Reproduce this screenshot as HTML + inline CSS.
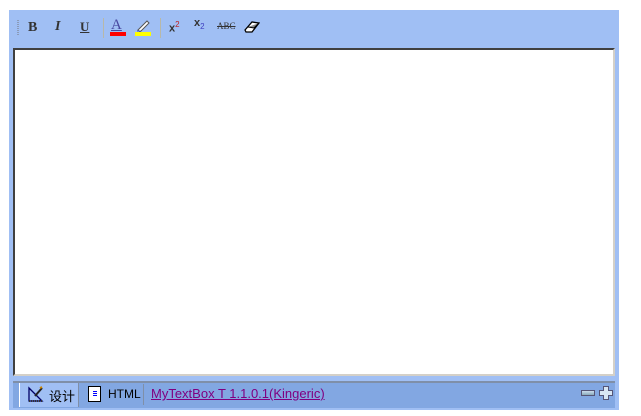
<!DOCTYPE html>
<html><head><meta charset="utf-8"><style>
body{margin:0;background:#fff;width:641px;height:416px;position:relative;overflow:hidden;font-family:"Liberation Sans","Noto Sans CJK SC",sans-serif}
.outer{position:absolute;left:9px;top:10px;width:610px;height:400px;background:#a0bff4}
.ed{position:absolute;left:13px;top:48px;width:598px;height:324px;background:#fff;border-top:2px solid #404040;border-left:2px solid #404040;border-right:2px solid #d4d0c8;border-bottom:2px solid #d4d0c8}
.bar{position:absolute;left:13px;top:381px;width:602px;height:25px;background:#82a7e2;border-top:2px solid #7f8fa8}
.t{position:absolute;font-size:13px;color:#333;font-weight:bold}
.sep{position:absolute;top:18px;width:1px;height:20px;background:#b8b8a8}
</style></head><body>
<div class="outer"></div>
<div style="position:absolute;left:17px;top:20px;width:2px;height:15px;background:repeating-linear-gradient(#8a9ab8 0 1px,transparent 1px 2px)"></div>
<div class="t" style="left:28px;top:20px;font-family:'Liberation Serif';font-size:14px">B</div>
<div class="t" style="left:55px;top:19px;font-family:'Liberation Serif';font-style:italic;font-size:14px">I</div>
<div class="t" style="left:80px;top:19px;font-family:'Liberation Serif';text-decoration:underline;font-size:13px">U</div>
<div class="sep" style="left:103px"></div>
<div class="t" style="left:111px;top:17px;font-family:'Liberation Serif';color:#4848a0;font-weight:normal;font-size:15px;text-decoration:underline">A</div>
<div style="position:absolute;left:110px;top:32px;width:16px;height:4px;background:#f00"></div>
<svg style="position:absolute;left:135px;top:18px" width="16" height="14"><path d="M3 12 L12 3 L14 5 L5 14Z" fill="#fff" stroke="#555"/><path d="M2 13h4" stroke="#4060c0"/></svg>
<div style="position:absolute;left:135px;top:32px;width:16px;height:4px;background:#ff0"></div>
<div class="sep" style="left:160px"></div>
<div class="t" style="left:169px;top:20px;font-size:11px">x<sup style="color:#c02020;font-size:8px;font-weight:normal">2</sup></div>
<div class="t" style="left:194px;top:17px;font-size:11px">x<sub style="color:#4040c0;font-size:8px;font-weight:normal">2</sub></div>
<div class="t" style="left:217px;top:21px;font-size:9px;font-family:'Liberation Serif';font-weight:normal;text-decoration:line-through">ABC</div>
<svg style="position:absolute;left:244px;top:20px" width="16" height="14"><path d="M1 10 L8 2 L15 3 L8 12 L2 12Z" fill="#fff" stroke="#000" stroke-width="1.3"/><path d="M4 7 L10 8 L15 3" fill="#888" stroke="#000"/></svg>
<div class="ed"></div>
<div class="bar"></div>
<div style="position:absolute;left:19px;top:383px;width:58px;height:24px;background:#a0bff4;border-left:1px solid #fff;border-right:1px solid #7f8fa8"></div>
<svg style="position:absolute;left:28px;top:386px" width="16" height="16"><path d="M1 15 L1 2 L14 15Z" fill="none" stroke="#006" stroke-width="1.3"/><path d="M1 15h14" stroke="#333" stroke-width="2" stroke-dasharray="1 1"/><path d="M7 10 L14 2" stroke="#222" stroke-width="2"/><path d="M12 2l2-1" stroke="#c80" stroke-width="2"/></svg>
<div style="position:absolute;left:49px;top:386px;font-size:13px;color:#000">设计</div>
<div style="position:absolute;left:143px;top:384px;width:1px;height:21px;background:#7f8fa8"></div>
<div style="position:absolute;left:88px;top:386px;width:11px;height:14px;background:#fff;border:1px solid #000"></div>
<div style="position:absolute;left:93px;top:391px;width:4px;height:1px;background:#00f;box-shadow:0 2px #00f,0 4px #00f"></div>
<div style="position:absolute;left:108px;top:387px;font-size:12px;color:#000">HTML</div>
<div style="position:absolute;left:151px;top:386px;font-size:13px;color:#800080;text-decoration:underline">MyTextBox T 1.1.0.1(Kingeric)</div>
<div style="position:absolute;left:581px;top:390px;width:12px;height:4px;background:linear-gradient(#cde,#8ab);border:1px solid #557"></div>
<svg style="position:absolute;left:599px;top:386px" width="14" height="14"><path d="M4.5 .5h5v4h4v5h-4v4h-5v-4h-4v-5h4z" fill="#d8e6f4" stroke="#557"/></svg>
</body></html>
